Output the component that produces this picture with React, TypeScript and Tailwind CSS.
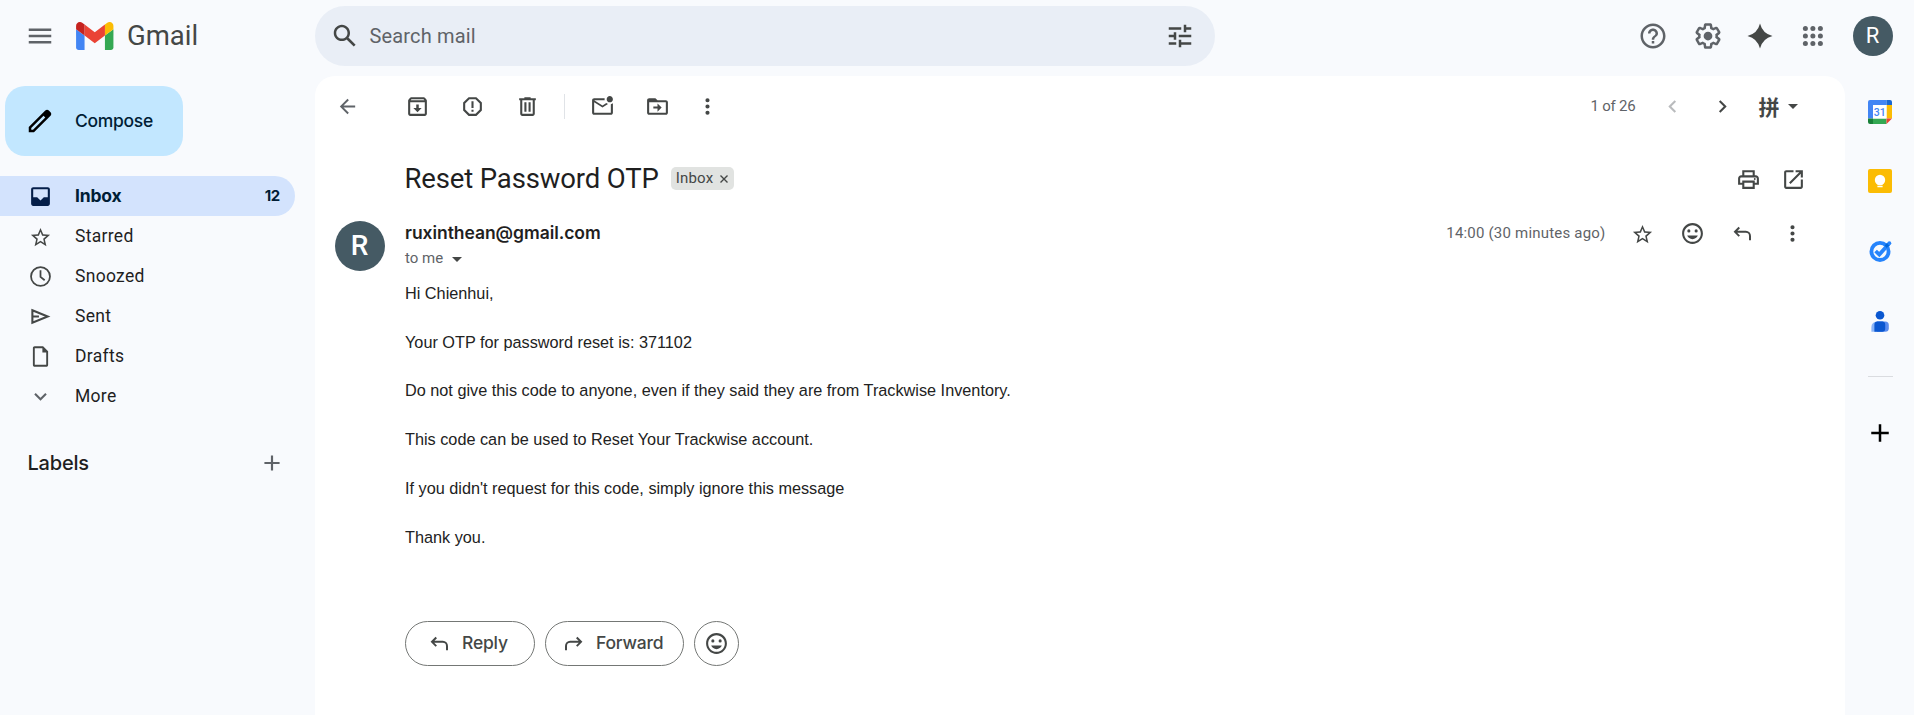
import type { ReactNode } from "react";

const P = {
  menu: "M3 18h18v-2H3v2zm0-5h18v-2H3v2zm0-7v2h18V6H3z",
  search:
    "M20.49 19l-5.73-5.73C15.53 12.2 16 10.91 16 9.5 16 5.91 13.09 3 9.5 3S3 5.91 3 9.5 5.91 16 9.5 16c1.41 0 2.7-.47 3.77-1.24L19 20.49 20.49 19zM5 9.5C5 7.01 7.01 5 9.5 5S14 7.01 14 9.5 11.99 14 9.5 14 5 11.99 5 9.5z",
  tune: "M3 17v2h6v-2H3zM3 5v2h10V5H3zm10 16v-2h8v-2h-8v-2h-2v6h2zM7 9v2H3v2h4v2h2V9H7zm14 4v-2H11v2h10zm-6-4h2V7h4V5h-4V3h-2v6z",
  help: "M11 18h2v-2h-2v2zm1-16C6.48 2 2 6.48 2 12s4.48 10 10 10 10-4.48 10-10S17.52 2 12 2zm0 18c-4.41 0-8-3.59-8-8s3.59-8 8-8 8 3.59 8 8-3.59 8-8 8zm0-14c-2.21 0-4 1.79-4 4h2c0-1.1.9-2 2-2s2 .9 2 2c0 2-3 1.75-3 5h2c0-2.25 3-2.5 3-5 0-2.21-1.79-4-4-4z",
  gear: "M13.85 22.25h-3.7c-.74 0-1.36-.54-1.45-1.27l-.27-1.89c-.27-.14-.53-.29-.79-.46l-1.8.72c-.7.26-1.47-.03-1.81-.65L2.2 15.53c-.35-.66-.2-1.44.36-1.88l1.53-1.19c-.01-.15-.02-.3-.02-.46 0-.15.01-.31.02-.46l-1.52-1.19c-.59-.45-.74-1.26-.37-1.88l1.85-3.19c.34-.62 1.11-.9 1.79-.63l1.81.73c.26-.17.52-.32.78-.46l.27-1.91c.09-.7.71-1.25 1.44-1.25h3.7c.74 0 1.36.54 1.45 1.27l.27 1.89c.27.14.53.29.79.46l1.8-.72c.71-.26 1.48.03 1.82.65l1.84 3.18c.36.66.2 1.44-.36 1.88l-1.52 1.19c.01.15.02.3.02.46s-.01.31-.02.46l1.52 1.19c.56.45.72 1.23.37 1.86l-1.86 3.22c-.34.62-1.11.9-1.8.63l-1.8-.72c-.26.17-.52.32-.78.46l-.27 1.91c-.1.68-.72 1.22-1.46 1.22zm-3.23-2h2.76l.37-2.55.53-.22c.44-.18.88-.44 1.34-.78l.45-.34 2.38.96 1.38-2.4-2.03-1.58.07-.56c.03-.26.06-.51.06-.78s-.03-.53-.06-.78l-.07-.56 2.03-1.58-1.39-2.4-2.39.96-.45-.35c-.42-.32-.87-.58-1.33-.77l-.52-.22-.37-2.55h-2.76l-.37 2.55-.53.21c-.44.19-.88.44-1.34.79l-.45.33-2.38-.95-1.39 2.39 2.03 1.58-.07.56a7 7 0 0 0-.06.79c0 .26.02.53.06.78l.07.56-2.03 1.58 1.38 2.4 2.39-.96.45.35c.43.33.86.58 1.33.77l.53.22.38 2.55zM12 8.5a3.5 3.5 0 1 0 0 7 3.5 3.5 0 0 0 0-7z",
  spark: "M12 2Q14 10 22 12Q14 14 12 22Q10 14 2 12Q10 10 12 2z",
  pencil:
    "M20.41 4.94l-1.35-1.35c-.78-.78-2.05-.78-2.83 0L13.4 6.41 3 16.82V21h4.18l10.46-10.46 2.77-2.77c.79-.77.79-2.05 0-2.83zM6.41 19.06L5 19v-1.36l9.82-9.82 1.41 1.41-9.82 9.83z",
  inbox:
    "M19 3H5c-1.1 0-2 .9-2 2v14c0 1.1.9 2 2 2h14c1.1 0 2-.9 2-2V5c0-1.1-.9-2-2-2zm0 9.6h-3.8L12 15.8 8.8 12.6H5V5h14v7.6z",
  star: "M22 9.24l-7.19-.62L12 2 9.19 8.63 2 9.24l5.46 4.73L5.82 21 12 17.27 18.18 21l-1.63-7.03L22 9.24zM12 15.4l-3.76 2.27 1-4.28-3.32-2.88 4.38-.38L12 6.1l1.71 4.04 4.38.38-3.32 2.88 1 4.28L12 15.4z",
  draft:
    "M14.5 2.2H6.4c-.95 0-1.7.77-1.7 1.7v16.2c0 .93.75 1.7 1.7 1.7h11.2c.95 0 1.7-.77 1.7-1.7V7l-4.8-4.8zM6.5 20V4h7.3v4.2h3.7V20h-11z",
  down: "M7.41 8.59L12 13.17l4.59-4.58L18 10l-6 6-6-6z",
  plus: "M19 13h-6v6h-2v-6H5v-2h6V5h2v6h6z",
  back: "M20 11H7.83l5.59-5.59L12 4l-8 8 8 8 1.41-1.41L7.83 13H20v-2z",
  archive:
    "M20.54 5.23l-1.39-1.68C18.88 3.21 18.47 3 18 3H6c-.47 0-.88.21-1.16.55L3.46 5.23C3.17 5.57 3 6.02 3 6.5V19c0 1.1.9 2 2 2h14c1.1 0 2-.9 2-2V6.5c0-.48-.17-.93-.46-1.27zM6.24 5h11.52l.83 1H5.42l.82-1zM5 19V8h14v11H5zm11-5.5l-4 4-4-4h2.8V10h2.4v3.5H16z",
  report:
    "M15.73 3H8.27L3 8.27v7.46L8.27 21h7.46L21 15.73V8.27L15.73 3zM19 14.9L14.9 19H9.1L5 14.9V9.1L9.1 5h5.8L19 9.1v5.8zM11 7h2v6.5h-2zM11 15h2v2h-2z",
  trash:
    "M15 4V3H9v1H4v2h1v13c0 1.1.9 2 2 2h10c1.1 0 2-.9 2-2V6h1V4h-5zm2 15H7V6h10v13zM9 8h2v9H9zm4 0h2v9h-2z",
  unread:
    "M22 8.98V18c0 1.1-.9 2-2 2H4c-1.1 0-2-.9-2-2V6c0-1.1.9-2 2-2h10.1C14.04 4.32 14 4.66 14 5c0 .34.04.68.1 1H4l8 5 3.67-2.29c.47.43 1.02.76 1.63.98L12 13 4 8v10h16V9.9c.74-.15 1.42-.48 2-.92zM16 5c0 1.66 1.34 3 3 3s3-1.34 3-3-1.34-3-3-3-3 1.34-3 3z",
  move: "M20 6h-8l-2-2H4c-1.1 0-2 .9-2 2v12c0 1.1.9 2 2 2h16c1.1 0 2-.9 2-2V8c0-1.1-.9-2-2-2zm0 12H4V8h16v10zm-8-1l4-4-4-4v3H8v2h4v3z",
  left: "M15.41 7.41L14 6l-6 6 6 6 1.41-1.41L10.83 12z",
  right: "M10 6L8.59 7.41 13.17 12l-4.58 4.59L10 18l6-6z",
  caret: "M7 10l5 5 5-5z",
  print:
    "M19 8h-1V3H6v5H5c-1.66 0-3 1.34-3 3v6h4v4h12v-4h4v-6c0-1.66-1.34-3-3-3zM8 5h8v3H8V5zm8 12v2H8v-4h8v2zm2-2v-2H6v2H4v-4c0-.55.45-1 1-1h14c.55 0 1 .45 1 1v4h-2zM18 10.6a.9.9 0 1 0 0 1.8.9.9 0 0 0 0-1.8z",
  open: "M19 19H5V5h7V3H5c-1.11 0-2 .9-2 2v14c0 1.1.89 2 2 2h14c1.1 0 2-.9 2-2v-7h-2v7zM14 3v2h3.59l-9.83 9.83 1.41 1.41L19 6.41V10h2V3h-7z",
  smile:
    "M12 2C6.47 2 2 6.48 2 12s4.47 10 10 10 10-4.48 10-10S17.52 2 12 2zm0 18c-4.42 0-8-3.58-8-8s3.58-8 8-8 8 3.58 8 8-3.58 8-8 8zM8.5 8a1.5 1.5 0 1 0 0 3 1.5 1.5 0 0 0 0-3zm7 0a1.5 1.5 0 1 0 0 3 1.5 1.5 0 0 0 0-3zM12 17.5c2.33 0 4.3-1.46 5.1-3.5H6.9c.8 2.04 2.77 3.5 5.1 3.5z",
  more: "M12 8a2 2 0 1 0 0-4 2 2 0 0 0 0 4zm0 2a2 2 0 1 0 0 4 2 2 0 0 0 0-4zm0 6a2 2 0 1 0 0 4 2 2 0 0 0 0-4z",
};

function Icon({ d, size = 25, className = "" }: { d: string; size?: number; className?: string }) {
  return (
    <svg width={size} height={size} viewBox="0 0 24 24" className={`shrink-0 ${className}`} fill="currentColor" fillRule="evenodd">
      <path d={d} />
    </svg>
  );
}

function StrokeIcon({ d, size = 25, width = 1.9, flip = false }: { d: string; size?: number; width?: number; flip?: boolean }) {
  return (
    <svg width={size} height={size} viewBox="0 0 24 24" className={flip ? "shrink-0 -scale-x-100" : "shrink-0"} fill="none" stroke="currentColor" strokeWidth={width}>
      <path d={d} />
    </svg>
  );
}

const REPLY = "M8.9 6.3L4.8 10.4L8.9 14.5M4.8 10.4H15.2a4 4 0 0 1 4 4V18.4";
const CLOCK = "M12 2.9a9.1 9.1 0 1 0 0 18.2a9.1 9.1 0 0 0 0-18.2zM12 6V12.3L16 15.6";
const SEND = "M4.2 6L18.9 12L4.2 18zM4.2 12H10.5";

function Cell({ w, children }: { w: string; children: ReactNode }) {
  return <div className={`flex shrink-0 justify-center ${w}`}>{children}</div>;
}

function NavItem({ icon, label }: { icon: ReactNode; label: string }) {
  return (
    <div className="flex h-10 items-center pl-[28px] text-[#444746]">
      {icon}
      <span className="ml-[22px] text-[17.5px] tracking-[0.3px] text-[#1f1f1f]">{label}</span>
    </div>
  );
}

function GmailLogo() {
  return (
    <svg width="37.5" height="28" viewBox="52 42 88 66" className="shrink-0">
      <path fill="#4285f4" d="M58 108h14V74L52 59v43c0 3.32 2.69 6 6 6" />
      <path fill="#34a853" d="M120 108h14c3.32 0 6-2.69 6-6V59l-20 15" />
      <path fill="#fbbc04" d="M120 48v26l20-15v-8c0-7.42-8.47-11.65-14.4-7.2" />
      <path fill="#ea4335" d="M72 74V48l24 18 24-18v26L96 92" />
      <path fill="#c5221f" d="M52 51v8l20 15V48l-5.6-4.2c-5.94-4.45-14.4-.22-14.4 7.2" />
    </svg>
  );
}

function Header() {
  return (
    <header className="flex h-[76px] shrink-0 items-center pb-1">
      <div className="flex w-[315px] shrink-0 items-center pl-[25px]">
        <Icon d={P.menu} size={30} className="text-[#5f6368]" />
        <div className="w-[21px]" />
        <GmailLogo />
        <span className="ml-[13.5px] text-[27.5px] leading-none text-[#444746]">Gmail</span>
      </div>
      <div className="flex h-[60px] w-[900px] shrink-0 items-center rounded-full bg-[#e9eef6] pl-[15px] pr-5">
        <Icon d={P.search} size={30} className="text-[#444746]" />
        <span className="ml-[9.5px] text-[20px] tracking-[0.15px] text-[#5f6368]">Search mail</span>
        <Icon d={P.tune} size={30} className="ml-auto text-[#444746]" />
      </div>
      <div className="ml-auto flex items-center pr-[21px] text-[#5f6368]">
        <Icon d={P.help} size={30} />
        <Icon d={P.gear} size={30} className="ml-[25px]" />
        <Icon d={P.spark} size={30} className="ml-[22px] text-[#444746]" />
        <svg width="30" height="30" viewBox="0 0 24 24" fill="currentColor" className="ml-[23px]">
          {[6, 12, 18].map((y) => [6, 12, 18].map((x) => <circle key={`${x}-${y}`} cx={x - 0.1} cy={y} r="2" />))}
        </svg>
        <div className="ml-[25px] flex h-10 w-10 items-center justify-center rounded-full bg-[#455a64] pr-px text-[22px] leading-none text-white">R</div>
      </div>
    </header>
  );
}

function Sidebar() {
  return (
    <nav className="w-[315px] shrink-0">
      <div className="mt-[10px] ml-[5px] flex h-[70px] w-[178px] items-center rounded-[20px] bg-[#c2e7ff] pl-5">
        <Icon d={P.pencil} size={30} className="text-black" />
        <span className="ml-5 font-[Inter] text-[17.5px] font-medium tracking-[-0.3px] text-[#001d35]">Compose</span>
      </div>
      <div className="mt-5 flex h-10 w-[295px] items-center rounded-r-full bg-[#d3e3fd] pl-[28px] pr-[15px] text-[#041e49]">
        <Icon d={P.inbox} />
        <span className="ml-[22px] font-[Inter] text-[17.5px] font-bold tracking-[-0.2px] text-[#001d35]">Inbox</span>
        <span className="ml-auto font-[Inter] text-[15px] font-bold tracking-[-0.3px] text-[#001d35]">12</span>
      </div>
      <NavItem icon={<Cell w="w-[25px]"><Icon d={P.star} size={23} className="mt-[2px]" /></Cell>} label="Starred" />
      <NavItem icon={<StrokeIcon d={CLOCK} width={1.7} />} label="Snoozed" />
      <NavItem icon={<StrokeIcon d={SEND} width={2} />} label="Sent" />
      <NavItem icon={<Icon d={P.draft} />} label="Drafts" />
      <NavItem icon={<Icon d={P.down} className="text-[#5f6368]" />} label="More" />
      <div className="mt-[27px] flex h-10 items-center pl-[27.5px] pr-[30px]">
        <span className="font-[Inter] text-[20px] font-medium tracking-[-0.2px] text-[#1f1f1f]">Labels</span>
        <Icon d={P.plus} size={26} className="ml-auto text-[#5f6368]" />
      </div>
    </nav>
  );
}

function Toolbar() {
  return (
    <div className="flex h-[61px] shrink-0 items-center pr-10 pl-[7.5px] text-[#444746]">
      <Cell w="w-[50px]"><Icon d={P.back} size={23} className="text-[#5f6368]" /></Cell>
      <div className="w-[17.5px]" />
      <Cell w="w-[55px]"><Icon d={P.archive} /></Cell>
      <Cell w="w-[55px]"><Icon d={P.report} /></Cell>
      <Cell w="w-[55px]"><Icon d={P.trash} /></Cell>
      <div className="mr-[10px] ml-[9px] h-[25px] w-px bg-[#e0e3e7]" />
      <Cell w="w-[55px]"><Icon d={P.unread} /></Cell>
      <Cell w="w-[55px]"><Icon d={P.move} /></Cell>
      <Cell w="w-[45px]"><Icon d={P.more} /></Cell>
      <span className="mr-[12.5px] ml-auto text-[15px] tracking-[-0.2px] text-[#5f6368]">1 of 26</span>
      <Cell w="w-[49px]"><Icon d={P.left} className="text-[#b9bbbd]" /></Cell>
      <Cell w="w-[50px]"><Icon d={P.right} /></Cell>
      <span className="ml-[11.5px] font-['Noto_Sans_CJK_SC',sans-serif] text-[21px] leading-[25px] font-bold">拼</span>
      <Icon d={P.caret} size={24} className="-mt-[2px] ml-[1.5px]" />
    </div>
  );
}

function Message() {
  const lines = [
    "Hi Chienhui,",
    "Your OTP for password reset is: 371102",
    "Do not give this code to anyone, even if they said they are from Trackwise Inventory.",
    "This code can be used to Reset Your Trackwise account.",
    "If you didn't request for this code, simply ignore this message",
    "Thank you.",
  ];
  return (
    <section className="flex pl-5">
      <div className="mt-px flex h-[50px] w-[50px] shrink-0 items-center justify-center rounded-full bg-[#455a64] pr-px text-[28px] leading-none font-medium text-white">R</div>
      <div className="ml-5 flex-1">
        <div className="flex h-[27px] items-center pr-[27.5px] text-[#444746]">
          <span className="font-[Inter] text-[17.5px] font-semibold tracking-[-0.05px] text-[#1f1f1f]">ruxinthean@gmail.com</span>
          <span className="mr-[12px] ml-auto text-[15px] tracking-[0.2px] text-[#5f6368]">14:00 (30 minutes ago)</span>
          <Cell w="w-[50px]"><Icon d={P.star} size={23} className="mt-[2px]" /></Cell>
          <Cell w="w-[50px]"><Icon d={P.smile} /></Cell>
          <Cell w="w-[50px]"><StrokeIcon d={REPLY} /></Cell>
          <Cell w="w-[50px]"><Icon d={P.more} /></Cell>
        </div>
        <div className="flex h-[23px] items-center text-[#5f6368]">
          <span className="text-[15px]">to me</span>
          <Icon d={P.caret} size={24} className="ml-[1.5px] text-[#444746]" />
        </div>
        <div className="mt-[10.8px] flex flex-col gap-[24.375px] font-['Liberation_Sans',Arial,sans-serif] text-[16.25px] leading-[24.375px] text-[#222222]">
          {lines.map((l) => (
            <p key={l}>{l}</p>
          ))}
        </div>
        <div className="mt-[72.2px] flex gap-[10px] font-[Inter] text-[17.5px] font-medium tracking-[-0.2px] text-[#444746]">
          <button className="flex h-[45px] w-[130px] items-center rounded-full border border-[#747775] pb-px pl-[21px]">
            <StrokeIcon d={REPLY} />
            <span className="ml-[10px]">Reply</span>
          </button>
          <button className="flex h-[45px] w-[139px] items-center rounded-full border border-[#747775] pb-px pl-[15px]">
            <StrokeIcon d={REPLY} flip />
            <span className="ml-[10px]">Forward</span>
          </button>
          <button className="flex h-[45px] w-[45px] items-center justify-center rounded-full border border-[#747775]">
            <Icon d={P.smile} />
          </button>
        </div>
      </div>
    </section>
  );
}

function AppRail() {
  return (
    <aside className="flex w-[69px] shrink-0 flex-col items-center pt-[23.5px] pl-px">
      <svg width="24" height="24" viewBox="0 0 24 24">
        <path fill="#4285f4" d="M2 0H18.5V5H5V18.5H0V2a2 2 0 0 1 2-2z" />
        <path fill="#1967d2" d="M18.5 0H22a2 2 0 0 1 2 2V5H18.5z" />
        <path fill="#fbbc04" d="M18.5 5H24V18.5H18.5z" />
        <path fill="#34a853" d="M5 18.5H18.5V24H5z" />
        <path fill="#188038" d="M0 18.5H5V24H2a2 2 0 0 1-2-2z" />
        <path fill="#ea4335" d="M18.5 18.5H24L18.5 24z" />
        <path fill="#ffffff" d="M5 5H18.5V18.5H5z" />
        <text x="11.8" y="15.7" textAnchor="middle" fontSize="10.5" fontWeight="500" fontFamily="Roboto" fill="#4285f4">31</text>
      </svg>
      <svg width="24" height="24" viewBox="0 0 24 24" className="mt-[45.5px]">
        <rect width="24" height="24" rx="2" fill="#fbbc04" />
        <circle cx="12" cy="11" r="5.2" fill="#fff" />
        <path fill="#fff" d="M9.4 13h5.2v2.4H9.4zM9.4 16.7h5.2v1.6H9.4z" />
      </svg>
      <svg width="24" height="24" viewBox="0 0 24 24" className="mt-[45.5px]">
        <circle cx="12" cy="12.4" r="8.6" fill="none" stroke="#2684fc" strokeWidth="3.8" />
        <path d="M7.6 12L11.3 15.6L20.8 5.1" fill="none" stroke="#2684fc" strokeWidth="3.8" />
        <path d="M16.6 6.6L19.4 3.6L21.4 6.2L18.7 9.1z" fill="#0066da" />
        <circle cx="21.4" cy="4.2" r="1.9" fill="#2684fc" />
      </svg>
      <svg width="24" height="24" viewBox="0 0 24 24" className="mt-[46px]">
        <circle cx="12" cy="6.2" r="4.3" fill="#0b57d0" />
        <path fill="#8ab4f8" d="M9 12.4h6v10.4H3.4V18A5.6 5.6 0 0 1 9 12.4z" />
        <path fill="#5b8def" d="M9 12.4h8.2a3.6 3.6 0 0 1 3.6 3.6v3.2a3.6 3.6 0 0 1-3.6 3.6H9z" />
        <path fill="#0b57d0" d="M9.4 12.4h4.8a3 3 0 0 1 3 3v4.4a3 3 0 0 1-3 3H6.4v-7.4a3 3 0 0 1 3-3z" />
      </svg>
      <div className="mt-[43px] h-px w-[25px] bg-[#dadce0]" />
      <Icon d={P.plus} size={30} className="mt-[41px] text-black" />
    </aside>
  );
}

export default function App() {
  return (
    <div className="flex h-[715px] w-full flex-col overflow-hidden bg-[#f8fafd] font-[Roboto] text-[#1f1f1f]">
      <Header />
      <div className="flex min-h-0 flex-1">
        <Sidebar />
        <main className="flex min-w-0 flex-1 flex-col rounded-t-[20px] bg-white">
          <Toolbar />
          <div className="flex h-[83px] shrink-0 items-center pr-[29px] pl-[89.5px] text-[#444746]">
            <h1 className="text-[27.5px] leading-none tracking-[-0.14px] text-[#1f1f1f]">Reset Password OTP</h1>
            <div className="ml-[12px] flex h-[23px] w-[63px] items-center rounded-[5px] bg-[#e1e3e1] pl-[5px] text-[15px]">
              <span className="tracking-[0.2px]">Inbox</span>
              <svg width="8" height="8" viewBox="0 0 8 8" className="mt-px ml-[6.5px]" stroke="currentColor" strokeWidth="1.4">
                <path d="M0.5 0.5L7.5 7.5M7.5 0.5L0.5 7.5" />
              </svg>
            </div>
            <div className="flex-1" />
            <Cell w="w-[45px]"><Icon d={P.print} className="mt-px" /></Cell>
            <Cell w="w-[45px]"><Icon d={P.open} className="mt-px" /></Cell>
          </div>
          <Message />
        </main>
        <AppRail />
      </div>
    </div>
  );
}
